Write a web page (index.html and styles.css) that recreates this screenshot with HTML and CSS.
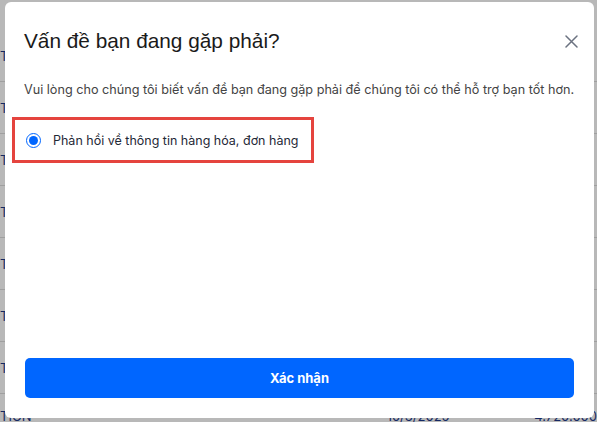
FILE: index.html
```html
<!DOCTYPE html>
<html lang="vi">
<head>
    <meta charset="UTF-8">
    <meta name="viewport" content="width=device-width, initial-scale=1.0">
    <title>Vấn đề bạn đang gặp phải?</title>
    <link rel="stylesheet" href="styles.css">
</head>
<body>
    <div class="page">
        <div class="row"><span>T</span></div>
        <div class="row"><span>T</span></div>
        <div class="row"><span>T</span></div>
        <div class="row"><span>T</span></div>
        <div class="row"><span>T</span></div>
        <div class="row"><span>T</span></div>
        <div class="row"><span>T</span></div>
        <div class="row last"><span>TION</span><span class="date">10/3/2025</span><span class="money">4.720.000</span></div>
    </div>

    <div class="overlay">
        <div class="modal">
            <div class="modal-head">
                <h2>Vấn đề bạn đang gặp phải?</h2>
                <button class="close" aria-label="Đóng">
                    <svg width="13" height="13" viewBox="0 0 13 13"><path d="M1 1L12 12M12 1L1 12" stroke="#6b7280" stroke-width="1.5" stroke-linecap="round"/></svg>
                </button>
            </div>
            <p class="desc">Vui lòng cho chúng tôi biết vấn đề bạn đang gặp phải để chúng tôi có thể hỗ trợ bạn tốt hơn.</p>
            <label class="option">
                <input type="radio" name="issue" checked>
                <span>Phản hồi về thông tin hàng hóa, đơn hàng</span>
            </label>
            <div class="spacer"></div>
            <button class="confirm">Xác nhận</button>
        </div>
    </div>
</body>
</html>
```

FILE: styles.css
```css
body { margin: 0; font-family: Inter, "Noto Sans", sans-serif; background: #fff; color: #1f2937; height: 100vh; overflow: hidden; }
.page { padding-top: 30px; height: 100vh; box-sizing: border-box; display: flex; flex-direction: column; }
.row { height: 51px; flex: none; border-bottom: 1px solid #ddd; display: flex; align-items: center; font-size: 13px; color: #1e3a8a; }
.row.last { border-bottom: none; height: 30px; align-items: flex-end; }
.row .date { margin-left: 355px; }
.row .money { margin-left: auto; }

.overlay { position: fixed; inset: 0; background: rgba(0, 0, 0, 0.28); display: flex; padding: 2px 5px 4px 5px; }
.modal { flex: 1; background: #fff; border-radius: 6px; padding: 25px 20px 20px 19px; display: flex; flex-direction: column; }

.modal-head { display: flex; align-items: center; justify-content: space-between; }
.modal-head h2 { margin: 0; font-family: "Liberation Sans", Arial, sans-serif; font-weight: 400; font-size: 20.8px; line-height: 28px; color: #1a1a1a; }
.close { background: none; border: none; padding: 0; margin-right: -4px; width: 13px; height: 13px; cursor: pointer; display: flex; }

.desc { margin: 26px 0 0 0; font-size: 12.65px; line-height: 18px; color: #444; white-space: nowrap; }

.option { margin: 18px 0 0 -12px; width: 302px; height: 46px; box-sizing: border-box; border: 3px solid #e5443e; display: flex; align-items: center; padding-left: 11px; gap: 12px; font-size: 12.5px; color: #1f2937; }
.option input { margin: 0; width: 15px; height: 15px; accent-color: #0066ff; }

.spacer { flex: 1; }
.confirm { height: 40px; margin-left: 1px; border: none; border-radius: 5px; background: #0066ff; color: #fff; font-family: Inter, sans-serif; font-size: 13px; font-weight: 700; cursor: pointer; }
```
